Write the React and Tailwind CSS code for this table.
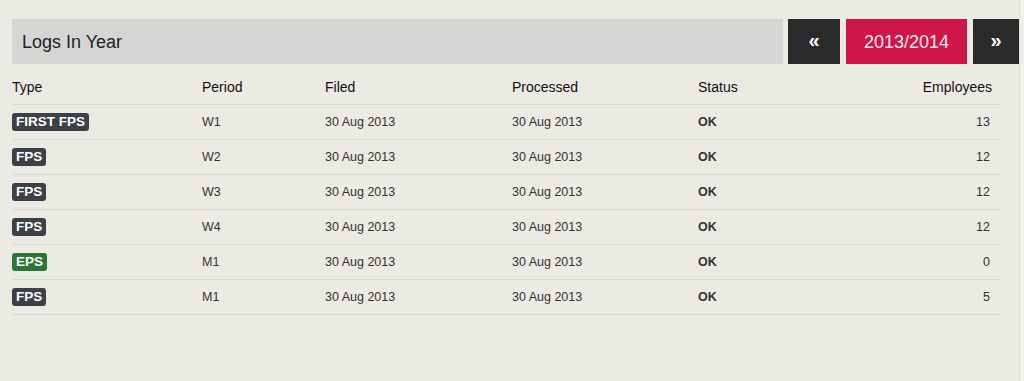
export default function App() {
  const rows = [
    { type: "FIRST FPS", color: "bg-[#3d4046]", period: "W1", emp: 13 },
    { type: "FPS", color: "bg-[#3d4046]", period: "W2", emp: 12 },
    { type: "FPS", color: "bg-[#3d4046]", period: "W3", emp: 12 },
    { type: "FPS", color: "bg-[#3d4046]", period: "W4", emp: 12 },
    { type: "EPS", color: "bg-[#2b7634]", period: "M1", emp: 0 },
    { type: "FPS", color: "bg-[#3d4046]", period: "M1", emp: 5 },
  ];
  return (
    <div className="w-[1024px] h-[381px] bg-[#f0efea] font-['Liberation_Sans',Arial,sans-serif]">
      <div className="w-[1020px] h-[381px] bg-[#ebeae3] border-r border-[#dddcd5] pt-[19px] pl-[12px]">
        <div className="flex h-[45px]">
          <div className="w-[771px] bg-[#d5d5d4] flex items-center pl-[10px] pt-[1px] text-[18px] text-[#222]">Logs In Year</div>
          <button className="ml-[5px] w-[52px] bg-[#2a2a2a] text-white text-[20px] font-bold flex items-center justify-center leading-none pb-[3px]">«</button>
          <div className="ml-[6px] w-[121px] bg-[#cf164a] text-[#fbe9ee] text-[18px] flex items-center justify-center pt-[1px]">2013/2014</div>
          <button className="ml-[6px] w-[46px] bg-[#2a2a2a] text-white text-[20px] font-bold flex items-center justify-center leading-none pb-[3px]">»</button>
        </div>
        <table className="mt-[6px] w-[988px] border-collapse table-fixed">
          <colgroup>
            <col className="w-[190px]" />
            <col className="w-[123px]" />
            <col className="w-[187px]" />
            <col className="w-[186px]" />
            <col className="w-[150px]" />
            <col />
          </colgroup>
          <thead>
            <tr className="h-[34px] text-[14px] text-[#111] text-left">
              <th className="font-normal p-0 pt-[2px]">Type</th>
              <th className="font-normal p-0 pt-[2px]">Period</th>
              <th className="font-normal p-0 pt-[2px]">Filed</th>
              <th className="font-normal p-0 pt-[2px]">Processed</th>
              <th className="font-normal p-0 pt-[2px]">Status</th>
              <th className="font-normal p-0 pt-[2px] text-right pr-[8px]">Employees</th>
            </tr>
          </thead>
          <tbody>
            {rows.map((r, i) => (
              <tr key={i} className="h-[35px] border-t border-b border-[#d9d8d1] text-[12.5px] text-[#333]">
                <td className="p-0 pt-[1px]">
                  <span className={`${r.color} inline-block text-white font-bold text-[13.5px] leading-[18px] px-[4px] rounded-[3px]`}>{r.type}</span>
                </td>
                <td className="p-0 pt-[2px]">{r.period}</td>
                <td className="p-0 pt-[2px]">30 Aug 2013</td>
                <td className="p-0 pt-[2px]">30 Aug 2013</td>
                <td className="p-0 pt-[2px] font-bold">OK</td>
                <td className="p-0 pt-[2px] text-right pr-[10px]">{r.emp}</td>
              </tr>
            ))}
          </tbody>
        </table>
      </div>
    </div>
  );
}
